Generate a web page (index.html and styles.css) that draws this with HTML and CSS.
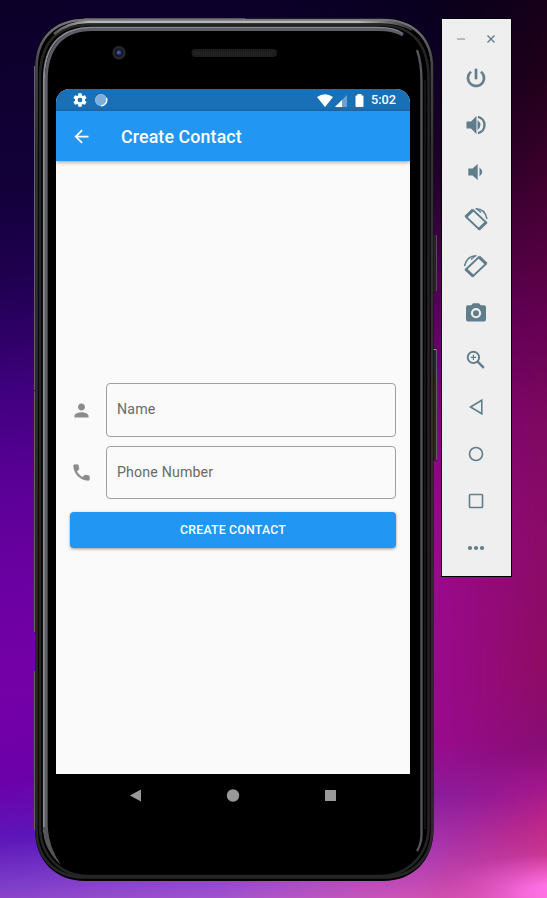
FILE: index.html
```html
<!DOCTYPE html>
<html lang="en">
<head>
<meta charset="utf-8">
<title>Create Contact</title>
<link rel="stylesheet" href="styles.css">
</head>
<body>
<main class="desktop">
  <section class="phone">
    <svg class="shell" width="404" height="864" viewBox="34 18 404 864" aria-hidden="true">
      <defs>
        <linearGradient id="rim" x1="0" y1="0" x2="0" y2="1">
          <stop offset="0" stop-color="#77777a"/><stop offset=".05" stop-color="#48494c"/><stop offset=".15" stop-color="#353535"/><stop offset="1" stop-color="#262626"/>
        </linearGradient>
        <linearGradient id="shine" x1="0" y1="0" x2="1" y2="0">
          <stop offset="0" stop-color="#555"/><stop offset=".1" stop-color="#b5b6b9"/><stop offset=".85" stop-color="#b5b6b9"/><stop offset="1" stop-color="#333"/>
        </linearGradient>
      </defs>
      <rect x="432" y="235" width="5" height="57" fill="#252525"/><path d="M436.500 235v56" stroke="#525452"/>
      <rect x="432" y="348" width="5" height="113" fill="#252525"/><path d="M436.500 349v111" stroke="#626664"/><path d="M433 349.500h3" stroke="#aaa"/>
      <path d="M35 66C35 38 54 18.500 85 18.500H383C414 18.500 433.500 38 433.500 66V830C433.500 861 412 881 383 881H85C56 881 35 861 35 830Z" fill="#000"/>
      <path d="M36.500 68C36.500 39 54 20 85 20H383C414 20 432 39 432 68V829C432 859 412 877.500 383 877.500H85C56 877.500 36.500 859 36.500 829Z" fill="none" stroke="url(#rim)" stroke-width="2.600"/>
      <path d="M34.500 66V390M34.500 391V632M34.500 671V830" stroke="#64646a"/>
      <path d="M84 18.500H245" stroke="#55565a"/>
      <path d="M40 827V78C40 42 58 25 88 25H380C410 25 428.500 42 428.500 78V827C428.500 855 408 876 380 876H88C60 876 40 855 40 827Z" fill="none" stroke="#242424" stroke-width="2.600"/>
      <path d="M54 34Q68 22 88 22H380Q400 22 412 30" fill="none" stroke="url(#shine)" stroke-width="2.600"/>
      <path d="M43.900 832V80C43.900 46 60 27.700 92 27.700H378Q396 27.700 403 34" fill="none" stroke="#8a8b92" stroke-width="2"/>
      <path d="M46.300 832V80C46.300 48 62 29.500 92 29.500H378Q394 29.500 403 35" fill="none" stroke="#5c5d65" stroke-width="2.800"/>
      <path d="M42.900 827Q43 849 61 865Q49 848 47.700 827Z" fill="#54565c"/>
      <path d="M417 50Q421.500 62 421.500 82V835Q421 845 417 851" fill="none" stroke="#55565a" stroke-width="2.300"/>
      <path d="M425 80V829" stroke="#26262a" stroke-width="1"/>
      <rect x="191.500" y="49" width="85.500" height="8" rx="4" fill="#1c1d1d"/>
      <path d="M195 52.500H273M195 54.500H273" stroke="#2c2e2e" stroke-dasharray="1 1"/>
      <circle cx="119" cy="52.700" r="6.700" fill="#272727"/><circle cx="119" cy="52.700" r="4.400" fill="#11172f"/><circle cx="119" cy="52.500" r="2.500" fill="#2c3973"/><circle cx="118.500" cy="52.500" r="1" fill="#6b7ab7"/>
    </svg>
    <div class="screen">
      <header class="status">
        <svg width="16" height="16" viewBox="0 0 24 24" fill="#fff"><path d="M19.430 12.980c.04-.32.070-.64.070-.98s-.03-.66-.07-.98l2.110-1.650c.19-.15.240-.42.120-.64l-2-3.460c-.12-.22-.39-.3-.61-.22l-2.490 1c-.52-.4-1.080-.73-1.690-.98l-.38-2.650A.49.490 0 0014 2h-4c-.25 0-.46.180-.49.420l-.38 2.650c-.61.250-1.170.590-1.690.980l-2.490-1c-.23-.09-.49 0-.61.220l-2 3.460c-.13.220-.07.490.120.640l2.110 1.650c-.04.320-.07.650-.07.980s.03.660.070.980l-2.110 1.650c-.19.150-.24.420-.12.640l2 3.460c.12.220.390.300.610.220l2.490-1c.52.400 1.080.730 1.690.980l.38 2.650c.03.240.240.420.490.420h4c.25 0 .46-.18.490-.42l.38-2.650c.61-.25 1.170-.59 1.690-.98l2.490 1c.23.090.490 0 .61-.22l2-3.460c.12-.22.070-.49-.12-.64zM12 15.500A3.500 3.500 0 1112 8.500a3.500 3.500 0 010 7z"/></svg>
        <svg class="sync" width="14" height="14" viewBox="0 0 14 14"><circle cx="7" cy="7" r="6" fill="#7fb0d9"/><circle cx="7" cy="7" r="5.500" fill="none" stroke="#a4c6e2" stroke-dasharray="1 1"/><path d="M12.500 5A6 6 0 017 12.900" fill="none" stroke="#fff" stroke-width="1.300"/></svg>
        <svg class="wifi" width="16" height="13" viewBox="0 0 16 13"><path d="M0 3Q8-2.500 16 3L8 13Z" fill="#fff"/></svg>
        <svg class="signal" width="13" height="13" viewBox="0 0 13 13"><path d="M0 13L12 1V13Z" fill="#6ba2d1"/><path d="M0 13L7 6V13Z" fill="#fff"/></svg>
        <svg class="battery" width="9" height="13" viewBox="0 0 9 13"><path d="M2.500 0h4v1.500H8q.5 0 .5.500v10q0 1-1 1h-6q-1 0-1-1V2q0-.5.500-.5h1.500Z" fill="#fff"/></svg>
        <span class="clock">5:02</span>
      </header>
      <div class="appbar">
        <svg width="21" height="21" viewBox="0 0 24 24" fill="#fff"><path d="M20 11H7.830l5.590-5.590L12 4l-8 8 8 8 1.410-1.410L7.830 13H20v-2z"/></svg>
        <h1>Create Contact</h1>
      </div>
      <form class="form">
        <div class="row">
          <svg width="21" height="21" viewBox="0 0 24 24" fill="#8b8b8b"><path d="M12 12c2.210 0 4-1.790 4-4s-1.790-4-4-4-4 1.790-4 4 1.790 4 4 4zm0 2c-2.670 0-8 1.340-8 4v2h16v-2c0-2.660-5.330-4-8-4z"/></svg>
          <div class="field">Name</div>
        </div>
        <div class="row">
          <svg width="21" height="21" viewBox="0 0 24 24" fill="#8b8b8b"><path d="M6.620 10.790c1.440 2.830 3.760 5.140 6.590 6.590l2.200-2.200c.27-.27.670-.36 1.020-.24 1.120.370 2.330.570 3.570.570.550 0 1 .45 1 1V20c0 .55-.45 1-1 1C10.610 21 3 13.390 3 4c0-.55.450-1 1-1h3.500c.55 0 1 .45 1 1 0 1.250.200 2.450.570 3.570.110.350.030.740-.25 1.020l-2.200 2.200z" stroke="#8b8b8b" stroke-width=".6"/></svg>
          <div class="field">Phone Number</div>
        </div>
        <button class="submit" type="button">CREATE CONTACT</button>
      </form>
    </div>
    <nav class="keys">
      <svg width="14" height="14" viewBox="0 0 14 14"><path d="M1.800 7.500L13 1.500V13.500Z"/></svg>
      <svg width="14" height="14" viewBox="0 0 14 14"><circle cx="7" cy="7.500" r="6.200"/></svg>
      <svg width="14" height="14" viewBox="0 0 14 14"><path d="M1 2h11v11h-11Z"/></svg>
    </nav>
  </section>
  <aside class="tools">
    <div class="window">
      <svg width="10" height="10" viewBox="0 0 10 10"><path d="M1 5h8" stroke="#a0b0b7" stroke-width="1.600"/></svg>
      <svg width="10" height="10" viewBox="0 0 10 10"><path d="M1.500 1.500l7 7m0-7l-7 7" stroke="#5f7d8b" stroke-width="1.400"/></svg>
    </div>
    <svg viewBox="0 0 24 24"><path d="M13 3h-2v10h2V3zm4.830 2.170l-1.420 1.420A6.920 6.920 0 0119 12a7 7 0 11-11.420-5.420L6.170 5.170A8.960 8.960 0 003 12a9 9 0 1014.830-6.830z" stroke="#607d8b" stroke-width=".7"/></svg>
    <svg viewBox="0 0 24 24"><path d="M2.500 8.500h4.500L12.500 3v18L7 15.500H2.500Z"/><path d="M13.500 7q6 5 0 10Z"/><path d="M14 3.900a8.300 8.300 0 010 16.200" fill="none" stroke="#607d8b" stroke-width="2.400"/></svg>
    <svg viewBox="0 0 24 24"><path d="M4.300 8.500h4.200L13.700 4v16L8.500 15.500H4.300ZM15.500 7.500q5.500 4.500 0 9Z"/></svg>
    <svg viewBox="0 0 24 24"><g fill="none" stroke="#607d8b"><path d="M2.200 10L9.300 3.200 22 15.200 14.800 22Z" stroke-width="1.900"/><path d="M1.500 10L9 2.700M14.700 22.500L22.500 15" stroke-width="3"/><path d="M11.500 1.700Q21 1.500 23 12" stroke-width="1.400"/><path d="M13 2l4 3.500" stroke-width="1.500"/></g></svg>
    <svg viewBox="0 0 24 24"><g fill="none" stroke="#607d8b"><path d="M21.800 10L14.700 3.200 2 15.200 9.200 22Z" stroke-width="1.900"/><path d="M22.500 10L15 2.700M9.300 22.500L1.500 15" stroke-width="3"/><path d="M12.500 1.700Q3 1.500 .5 12" stroke-width="1.400"/><path d="M11 2L7 5.500" stroke-width="1.500"/></g></svg>
    <svg viewBox="0 0 24 24"><path fill-rule="evenodd" d="M9 2.200L7.200 4.200H4a2 2 0 00-2 2V18.500a2 2 0 002 2h16a2 2 0 002-2V6.200a2 2 0 00-2-2h-3.200L15 2.200ZM12 17.300a5.100 5.100 0 110-10.200 5.100 5.100 0 010 10.200ZM12 15.200a3 3 0 100-6 3 3 0 000 6Z"/></svg>
    <svg viewBox="0 0 24 24"><g fill="none" stroke="#607d8b" stroke-width="1.900"><circle cx="9.400" cy="9.400" r="5.700"/><path d="M13.700 13.700L19.800 19.800" stroke-width="2.400"/><path d="M9.400 6.800v5.200M6.800 9.400h5.200" stroke-width="1.200"/></g></svg>
    <svg viewBox="0 0 24 24"><path d="M6.500 12L17.800 5.200V18.800Z" fill="none" stroke="#607d8b" stroke-width="1.600"/></svg>
    <svg viewBox="0 0 24 24"><circle cx="12" cy="12" r="6.500" fill="none" stroke="#607d8b" stroke-width="1.600"/></svg>
    <svg viewBox="0 0 24 24"><rect x="5.500" y="5.500" width="13" height="13" rx=".8" fill="none" stroke="#607d8b" stroke-width="1.600"/></svg>
    <svg viewBox="0 0 24 24"><circle cx="6" cy="12" r="2.100"/><circle cx="12" cy="12" r="2.100"/><circle cx="18" cy="12" r="2.100"/></svg>
  </aside>
</main>
</body>
</html>
```
FILE: styles.css
```css
* { box-sizing: border-box; }
body { margin: 0; font-family: Roboto, sans-serif; }
svg { display: block; flex: none; }
.desktop {
  position: relative;
  isolation: isolate;
  display: flex;
  align-items: flex-start;
  width: 547px;
  height: 898px;
  padding: 18px 0 0 34px;
  overflow: hidden;
  background: linear-gradient(174deg, #0b0028 0, #13003a 190px, #210054 290px, #420082 400px, #5c0098 490px, #6c00a2 590px, #7400a7 690px, #6c00a9 775px, #5c16b9 835px, #7d3cc8 880px, #b45fd2 935px);
}
.desktop::before,
.desktop::after { content: ""; position: absolute; z-index: -1; inset: 0; }
.desktop::before {
  background: linear-gradient(#08001e 0, #100028 100px, #20002c 180px, #55005c 300px, #800080 400px, #96088c 500px, #9c0a90 600px, #9a0a90 740px, #8a1fa0 798px, #aa38b0 850px, #d050b0 898px);
  mask-image: linear-gradient(90deg, transparent 40%, #000 80%);
}
.desktop::after {
  background:
    radial-gradient(ellipse 115px 38px at 547px 893px, #ff70e4 20%, rgba(255,105,225,.5) 60%, transparent 100%),
    linear-gradient(170deg, #080018 0, #200018 165px, #4a0036 310px, #650050 410px, #7e0860 510px, #8a0b68 620px, #8e0c62 750px, #880e74 830px, #a0158a 865px, #c02888 910px, #d84aa0 970px);
  mask-image: linear-gradient(90deg, transparent 78%, #000 100%);
}
.phone { position: relative; width: 407px; height: 864px; padding: 71px 0 0 22px; }
.shell { position: absolute; left: 0; top: 0; z-index: -1; }
.screen { width: 354px; height: 685px; background: #fafafa; border-radius: 14px 14px 0 0; overflow: hidden; }
.status { display: flex; align-items: center; height: 22px; padding: 0 14px 0 16px; background: #1a70b7; }
.sync { margin-left: 6px; }
.wifi { margin-left: auto; }
.signal { margin-left: 2px; }
.battery { margin-left: 7px; margin-right: 1px; }
.clock { margin-left: 6px; color: #fff; font-size: 12.700px; line-height: 22px; font-weight: 500; }
.appbar { display: flex; align-items: center; height: 50px; padding-left: 15px; background: #2196f3; box-shadow: 0 1px 4px rgba(0,0,0,.42); }
.appbar h1 { margin: 1px 0 0 29px; color: #fff; font-size: 17.800px; line-height: 24px; font-weight: 500; letter-spacing: .13px; }
.form { margin: 0; padding: 222px 14px 0; }
.row { display: flex; align-items: center; padding-left: 1px; margin-bottom: 9px; }
.field { display: flex; align-items: center; width: 290px; height: 54px; margin-left: 14px; padding: 0 0 2px 10px; border: 1px solid #a0a0a0; border-radius: 4px; color: #6a6a6a; font-size: 14.200px; letter-spacing: .15px; }
.row + .row .field { height: 53px; }
.submit { display: block; width: 326px; height: 36px; margin-top: 13px; padding: 0; border: 0; border-radius: 4px; background: #2196f3; color: #fff; font: 500 12.300px/36px Roboto, sans-serif; letter-spacing: .2px; box-shadow: 0 1px 3px rgba(0,0,0,.4); }
.keys { display: flex; gap: 84px; padding: 14px 0 0 72px; fill: #999; }
.tools { width: 71px; height: 559px; padding-right: 2px; border: 1px solid #000; background: #efefef; fill: #607d8b; display: flex; flex-direction: column; align-items: center; gap: 23px; }
.tools > svg { width: 24px; height: 24px; }
.window { display: flex; gap: 20px; height: 24px; padding-top: 15px; }
```
